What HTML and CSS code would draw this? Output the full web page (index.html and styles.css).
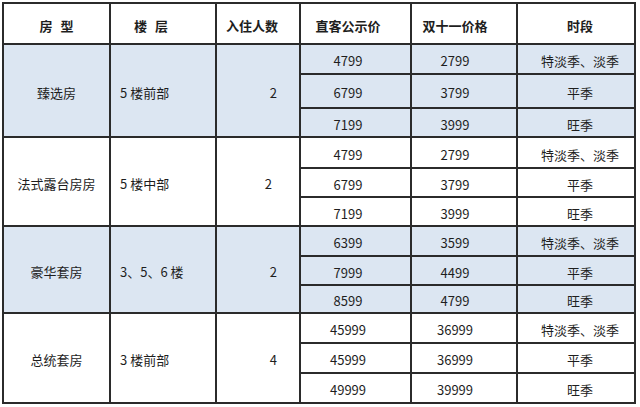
FILE: index.html
```html
<!DOCTYPE html>
<html lang="zh-CN">
<head>
<meta charset="utf-8">
<title>房型价格表</title>
<link rel="stylesheet" href="styles.css">
</head>
<body>
<div class="sheet">
  <div class="cell head c1">房 型</div>
  <div class="cell head c2">楼 层</div>
  <div class="cell head c3">入住人数</div>
  <div class="cell head c4">直客公示价</div>
  <div class="cell head c5">双十一价格</div>
  <div class="cell head c6">时段</div>

  <div class="cell span blue c1">臻选房</div>
  <div class="cell span blue c2">5 楼前部</div>
  <div class="cell span blue c3">2</div>
  <div class="cell blue c4">4799</div><div class="cell blue c5">2799</div><div class="cell blue c6">特淡季、淡季</div>
  <div class="cell blue c4">6799</div><div class="cell blue c5">3799</div><div class="cell blue c6">平季</div>
  <div class="cell blue c4">7199</div><div class="cell blue c5">3999</div><div class="cell blue c6">旺季</div>

  <div class="cell span c1">法式露台房房</div>
  <div class="cell span c2">5 楼中部</div>
  <div class="cell span c3 c3b">2</div>
  <div class="cell c4">4799</div><div class="cell c5">2799</div><div class="cell c6">特淡季、淡季</div>
  <div class="cell c4">6799</div><div class="cell c5">3799</div><div class="cell c6">平季</div>
  <div class="cell c4">7199</div><div class="cell c5">3999</div><div class="cell c6">旺季</div>

  <div class="cell span blue c1">豪华套房</div>
  <div class="cell span blue c2">3、5、6 楼</div>
  <div class="cell span blue c3">2</div>
  <div class="cell blue c4">6399</div><div class="cell blue c5">3599</div><div class="cell blue c6">特淡季、淡季</div>
  <div class="cell blue c4">7999</div><div class="cell blue c5">4499</div><div class="cell blue c6">平季</div>
  <div class="cell blue c4">8599</div><div class="cell blue c5">4799</div><div class="cell blue c6">旺季</div>

  <div class="cell span c1">总统套房</div>
  <div class="cell span c2">3 楼前部</div>
  <div class="cell span c3">4</div>
  <div class="cell c4">45999</div><div class="cell c5">36999</div><div class="cell c6">特淡季、淡季</div>
  <div class="cell c4">45999</div><div class="cell c5">36999</div><div class="cell c6">平季</div>
  <div class="cell c4">49999</div><div class="cell c5">39999</div><div class="cell c6">旺季</div>
</div>
</body>
</html>
```

FILE: styles.css
```css
html, body {
  margin: 0;
  padding: 0;
  background: #ffffff;
}

body {
  font-family: "Noto Sans CJK SC", "Noto Sans", sans-serif;
  font-size: 13px;
  color: #1e1e1e;
}

.sheet {
  margin: 2px 0 0 2px;
  width: 630px;
  padding: 2px;
  gap: 2px;
  display: grid;
  grid-template-columns: 105px 104px 82px 109px 104px 116px;
  grid-template-rows: 39px 28px 32px 27px 29px 27px 27px 28px 27px 26px 28px 28px 28px;
  background: #2b2b2b;
}

.cell {
  background: #ffffff;
  display: flex;
  align-items: center;
  justify-content: center;
  padding-top: 3px;
  box-sizing: border-box;
  white-space: nowrap;
}

.blue {
  background: #dce6f2;
}

.span {
  grid-row: span 3;
}

.head {
  font-weight: bold;
  word-spacing: 5px;
}

.c2 {
  justify-content: flex-start;
  padding-left: 9px;
}

.c3 {
  justify-content: flex-end;
  padding-right: 22px;
}

.c3b {
  padding-right: 27px;
}

.c4 {
  padding-right: 15px;
}

.c5 {
  padding-right: 18px;
}

.c6 {
  padding-left: 8px;
}

.head.c2 {
  justify-content: center;
  padding-left: 0;
  padding-right: 24px;
}

.head.c3 {
  justify-content: center;
  padding-right: 12px;
}
```
